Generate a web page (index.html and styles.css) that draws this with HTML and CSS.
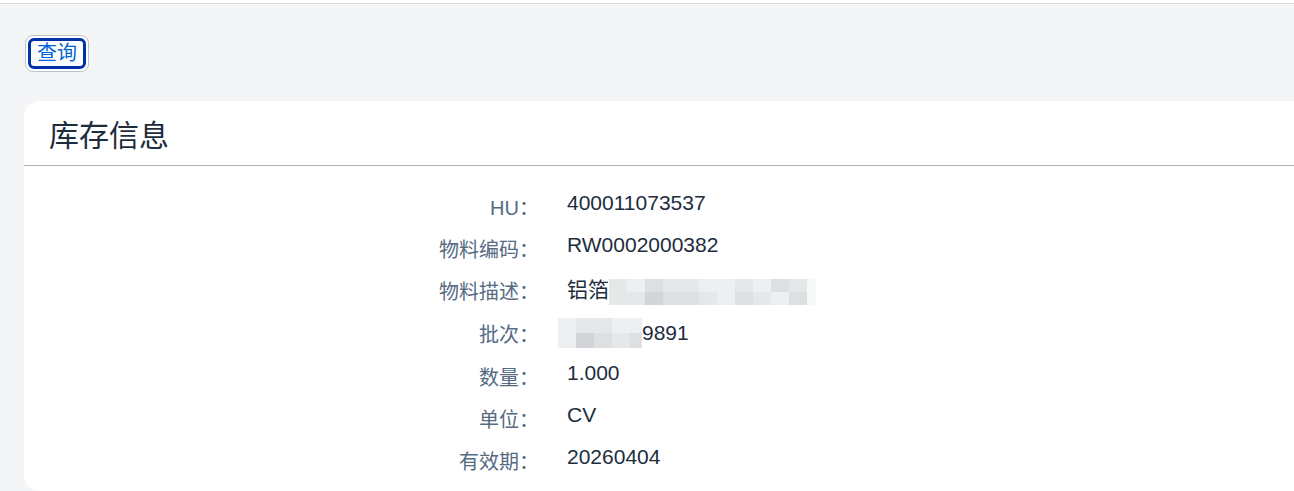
FILE: index.html
```html
<!DOCTYPE html>
<html lang="zh-CN">
<head>
    <meta charset="UTF-8">
    <meta name="viewport" content="width=device-width, initial-scale=1.0">
    <title>库存信息</title>
    <link rel="stylesheet" href="styles.css">
</head>
<body>
    <div class="topbar"></div>

    <div class="toolbar">
        <button type="button" class="query-btn"><span>查询</span></button>
    </div>

    <section class="card">
        <header class="card-header">
            <h2>库存信息</h2>
        </header>

        <div class="info-grid">
            <div class="label">HU：</div>
            <div class="value">400011073537</div>

            <div class="label">物料编码：</div>
            <div class="value">RW0002000382</div>

            <div class="label">物料描述：</div>
            <div class="value">铝箔<span class="mosaic wide">
                <i class="m2"></i><i class="m1"></i><i class="m3"></i><i class="m2"></i><i class="m2"></i><i class="m1"></i><i class="m1"></i><i class="m2"></i><i class="m1"></i><i class="m3"></i><i class="m2"></i><i class="m0"></i>
                <i class="m2"></i><i class="m2"></i><i class="m4"></i><i class="m3"></i><i class="m3"></i><i class="m2"></i><i class="m1"></i><i class="m3"></i><i class="m2"></i><i class="m1"></i><i class="m3"></i><i class="m0"></i>
            </span></div>

            <div class="label">批次：</div>
            <div class="value"><span class="mosaic short">
                <i class="m1"></i><i class="m2"></i><i class="m2"></i><i class="m1"></i><i class="m1"></i>
                <i class="m1"></i><i class="m4"></i><i class="m3"></i><i class="m2"></i><i class="m3"></i>
            </span>9891</div>

            <div class="label">数量：</div>
            <div class="value">1.000</div>

            <div class="label">单位：</div>
            <div class="value">CV</div>

            <div class="label">有效期：</div>
            <div class="value">20260404</div>
        </div>
    </section>
</body>
</html>
```

FILE: styles.css
```css
* {
    margin: 0;
    padding: 0;
    box-sizing: border-box;
}

body {
    font-family: 'Liberation Sans', 'Noto Sans CJK SC', sans-serif;
    background: #f4f5f7;
    color: #1d2d3e;
    overflow: hidden;
    height: 491px;
}

.topbar {
    height: 4px;
    background: #fff;
    border-bottom: 1px solid #d9dadc;
}

.toolbar {
    padding: 31px 0 0 25px;
    height: 97px;
}

.query-btn {
    display: inline-block;
    background: #fff;
    border: 1px solid #bcc3ca;
    border-radius: 8px;
    padding: 2px;
    cursor: pointer;
    font-family: inherit;
}

.query-btn span {
    display: block;
    border: 3px solid #0032a5;
    border-radius: 6px;
    padding: 0 6px;
    font-size: 20px;
    line-height: 25px;
    color: #0064d9;
}

.card {
    margin-left: 24px;
    width: 1290px;
    height: 390px;
    background: #fff;
    border-radius: 16px 0 0 16px;
}

.card-header {
    height: 65px;
    padding: 0 25px;
    display: flex;
    align-items: center;
    border-bottom: 1px solid #a8b2bd;
}

.card-header h2 {
    font-size: 30px;
    font-weight: 400;
    color: #1d2d3e;
}

.info-grid {
    display: grid;
    grid-template-columns: 515px auto;
    column-gap: 28px;
    row-gap: 13px;
    padding-top: 25px;
    align-items: start;
}

.label {
    text-align: right;
    font-size: 20px;
    line-height: 24px;
    padding-top: 5px;
    color: #556b82;
}

.value {
    font-size: 21px;
    line-height: 24px;
    display: flex;
    align-items: center;
}

.mosaic {
    display: inline-grid;
    grid-auto-rows: 13px;
}

.mosaic.wide {
    grid-template-columns: repeat(11, 18px) 9px;
    margin-top: 4px;
}

.mosaic.short {
    grid-template-columns: repeat(4, 18px) 12px;
    grid-auto-rows: 15px;
    margin-left: -9px;
}

.mosaic i { display: block; }
.m0 { background: #f7f8f8; }
.m1 { background: #eeeff0; }
.m2 { background: #e6e7e9; }
.m3 { background: #dddfe1; }
.m4 { background: #d2d4d8; }
```
